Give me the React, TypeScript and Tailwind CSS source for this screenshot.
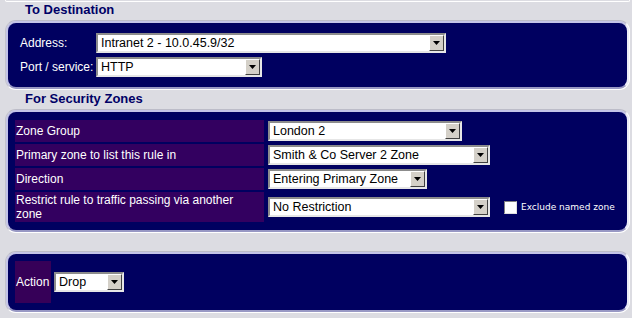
import React from 'react';

function Select({ value, className }: { value: string; className: string }) {
  return (
    <div
      className={`flex h-[20px] shrink-0 border-2 border-t-[#8c8c8c] border-l-[#8c8c8c] border-r-[#e6e6e6] border-b-[#e6e6e6] bg-white ${className}`}
    >
      <span className="flex-1 overflow-hidden whitespace-nowrap pl-[3px] text-[12.5px] leading-[16px] text-black">{value}</span>
      <span className="flex h-[16px] w-[15px] shrink-0 items-center justify-center border border-t-white border-l-white border-r-[#404040] border-b-[#404040] bg-[#d4d0c8]">
        <svg width="7" height="4" viewBox="0 0 7 4">
          <polygon points="0,0 7,0 3.5,4" fill="#000" />
        </svg>
      </span>
    </div>
  );
}

function Panel({ children, className }: { children: React.ReactNode; className?: string }) {
  return (
    <div
      className={`ml-[5px] mr-[2px] rounded-[11px] border border-t-[#bcbcc8] border-l-[#c4c4cc] border-r-white border-b-white ${className ?? ''}`}
    >
      <div className="rounded-[10px] border-2 border-t-[#c4c4e8] border-l-[#c4c4e8] border-r-[#ececf8] border-b-[#9898c4] bg-[#000060]">
        {children}
      </div>
    </div>
  );
}

const zoneRows = [
  { label: 'Zone Group', value: 'London 2', width: 'w-[194px]' },
  { label: 'Primary zone to list this rule in', value: 'Smith & Co Server 2 Zone', width: 'w-[222px]' },
  { label: 'Direction', value: 'Entering Primary Zone', width: 'w-[159px]' },
];

export default function App() {
  return (
    <div className="h-[318px] w-[632px] overflow-hidden bg-[#dcdce2] font-['Liberation_Sans',Arial,sans-serif]">
      {/* bottom of the panel above */}
      <div className="ml-[5px] mr-[2px] h-[2px] rounded-b-[6px] border-x border-b border-white" />

      <div className="h-[18px] pl-[25px] text-[13px] font-bold leading-[16px] text-[#000066]">To Destination</div>

      <Panel>
        <div className="flex flex-col gap-[4px] pb-[10px] pl-[12px] pt-[10px] text-[12px] text-white">
          <div className="flex h-[20px] items-center">
            <span className="w-[76px]">Address:</span>
            <Select value="Intranet 2 - 10.0.45.9/32" className="w-[350px]" />
          </div>
          <div className="flex h-[20px] items-center">
            <span className="w-[76px]">Port / service:</span>
            <Select value="HTTP" className="w-[166px]" />
          </div>
        </div>
      </Panel>

      <div className="h-[19px] pl-[25px] text-[13px] font-bold leading-[17px] text-[#000066]">For Security Zones</div>

      <Panel>
        <div className="flex flex-col gap-[2px] pb-[8px] pl-[7px] pt-[8px] text-[12px] text-white">
          {zoneRows.map(r => (
            <div key={r.label} className="flex h-[22px] items-center gap-[4px]">
              <div className="flex h-full w-[249px] items-center bg-[#330060] pl-[1px]">{r.label}</div>
              <Select value={r.value} className={r.width} />
            </div>
          ))}
          <div className="flex h-[30px] items-center gap-[4px]">
            <div className="flex h-full w-[249px] items-center bg-[#330060] pl-[1px] leading-[14px]">
              <span>
                Restrict rule to traffic passing via another
                <br />
                zone
              </span>
            </div>
            <Select value="No Restriction" className="w-[222px]" />
            <div className="ml-[10px] flex items-center gap-[4px]">
              <span className="h-[13px] w-[13px] border border-t-[#808080] border-l-[#808080] border-r-[#e0e0e0] border-b-[#e0e0e0] bg-white" />
              <span className="font-['DejaVu_Sans',Verdana,sans-serif] text-[9px] leading-[13px] text-white">Exclude named zone</span>
            </div>
          </div>
        </div>
      </Panel>

      <Panel className="mt-[18px]">
        <div className="flex items-center gap-[3px] pb-[7px] pl-[7px] pt-[7px] text-[12px] text-white">
          <div className="flex h-[42px] w-[36px] items-center bg-[#360058] pl-[1px]">Action</div>
          <Select value="Drop" className="w-[70px]" />
        </div>
      </Panel>
    </div>
  );
}
